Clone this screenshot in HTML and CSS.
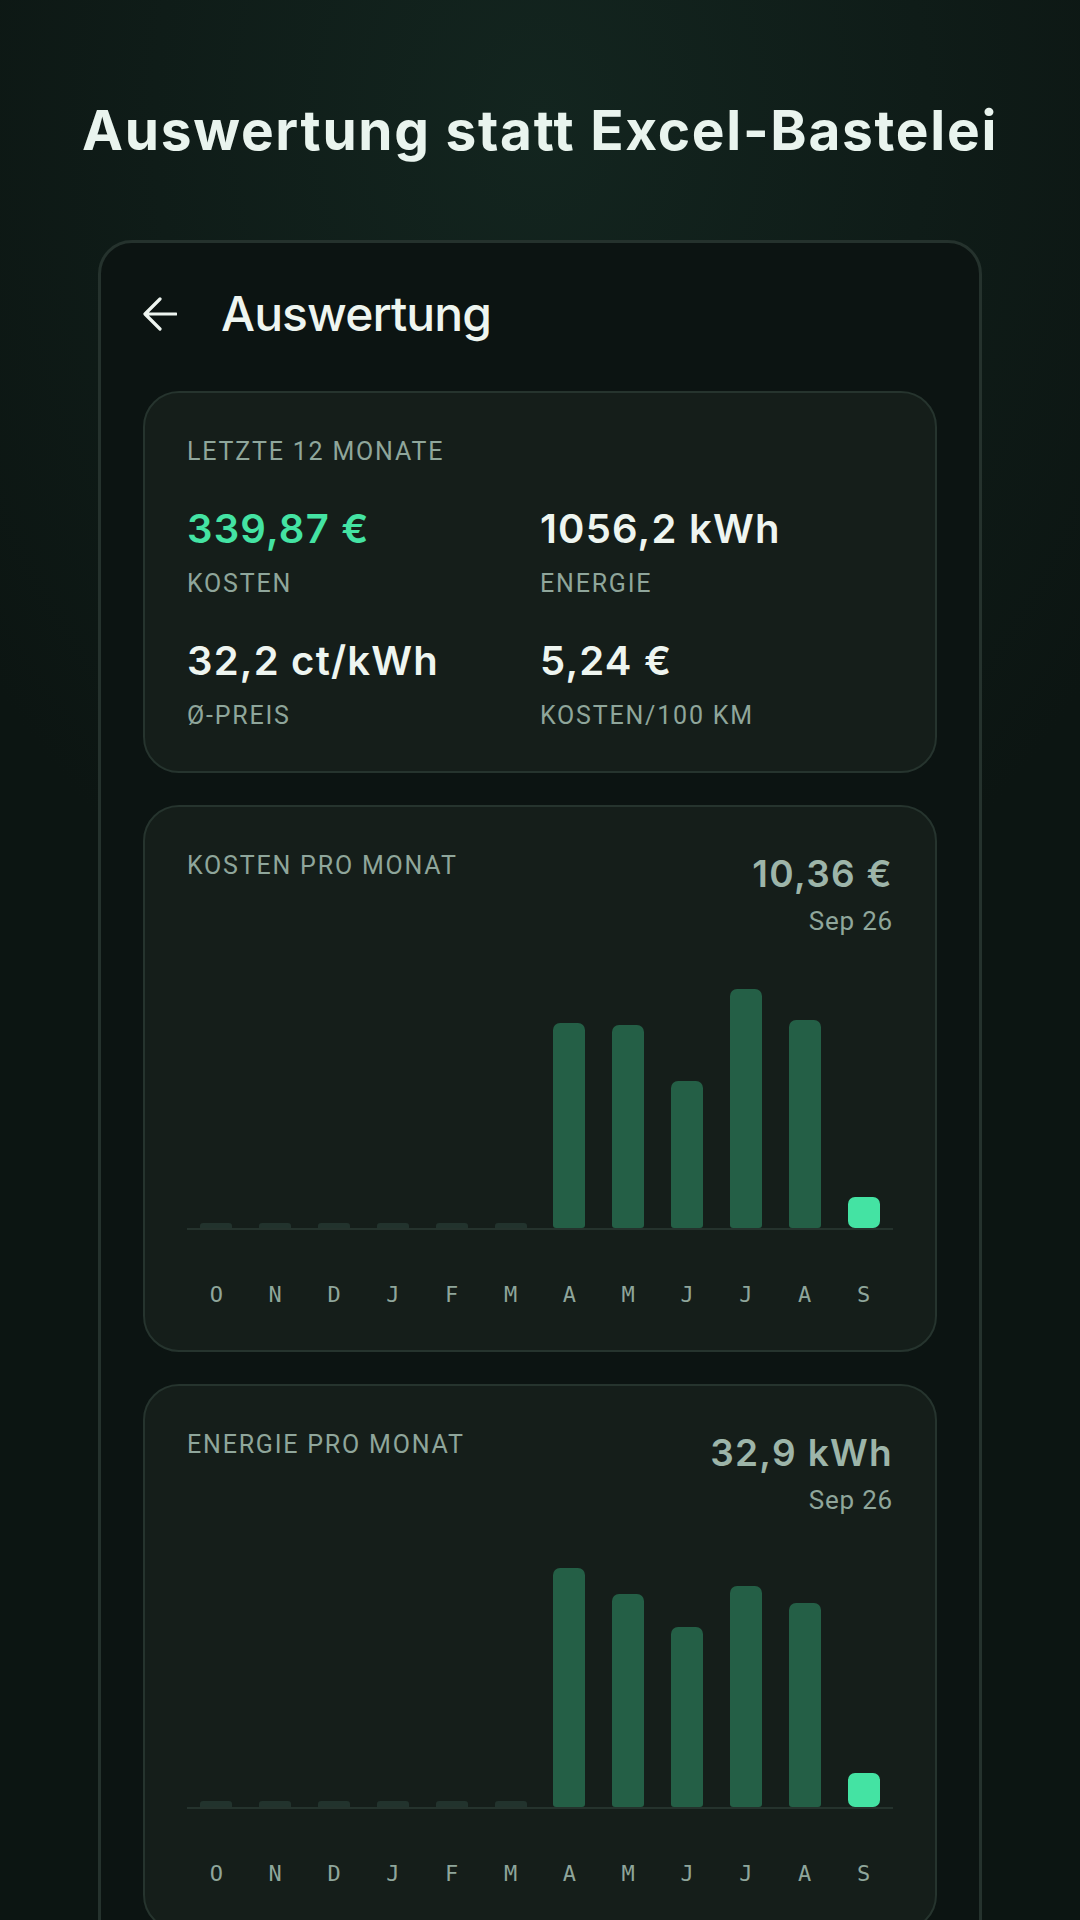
FILE: index.html
```html
<!DOCTYPE html>
<html lang="de">
<head>
<meta charset="utf-8">
<title>Auswertung</title>
<link rel="stylesheet" href="styles.css">
</head>
<body>
<h1 class="hero">Auswertung statt Excel-Bastelei</h1>
<div class="phone">
  <header class="appbar">
    <svg class="back" viewBox="0 0 34 34" width="34" height="34" aria-hidden="true">
      <path d="M33 17H3M17 2L2 17L17 32" fill="none" stroke="#eef5f0" stroke-width="3.2" stroke-linecap="round" stroke-linejoin="round"/>
    </svg>
    <span class="appbar-title">Auswertung</span>
  </header>

  <section class="card summary">
    <div class="caption">Letzte 12 Monate</div>
    <div class="stats">
      <div class="stat"><div class="val accent">339,87 €</div><div class="caption">Kosten</div></div>
      <div class="stat"><div class="val">1056,2 kWh</div><div class="caption">Energie</div></div>
      <div class="stat"><div class="val">32,2 ct/kWh</div><div class="caption">Ø-Preis</div></div>
      <div class="stat"><div class="val">5,24 €</div><div class="caption">Kosten/100 km</div></div>
    </div>
  </section>

  <section class="card chart-card">
    <div class="chart-head">
      <div class="caption">Kosten pro Monat</div>
      <div class="sel">
        <div class="sel-val">10,36 €</div>
        <div class="sel-date">Sep 26</div>
      </div>
    </div>
    <div class="bars">
      <div class="col"><div class="bar empty" style="height:5px"></div></div>
      <div class="col"><div class="bar empty" style="height:5px"></div></div>
      <div class="col"><div class="bar empty" style="height:5px"></div></div>
      <div class="col"><div class="bar empty" style="height:5px"></div></div>
      <div class="col"><div class="bar empty" style="height:5px"></div></div>
      <div class="col"><div class="bar empty" style="height:5px"></div></div>
      <div class="col"><div class="bar" style="height:205px"></div></div>
      <div class="col"><div class="bar" style="height:203px"></div></div>
      <div class="col"><div class="bar" style="height:147px"></div></div>
      <div class="col"><div class="bar" style="height:239px"></div></div>
      <div class="col"><div class="bar" style="height:208px"></div></div>
      <div class="col"><div class="bar active" style="height:31px"></div></div>
    </div>
    <div class="months">
      <span>O</span><span>N</span><span>D</span><span>J</span><span>F</span><span>M</span><span>A</span><span>M</span><span>J</span><span>J</span><span>A</span><span>S</span>
    </div>
  </section>

  <section class="card chart-card">
    <div class="chart-head">
      <div class="caption">Energie pro Monat</div>
      <div class="sel">
        <div class="sel-val">32,9 kWh</div>
        <div class="sel-date">Sep 26</div>
      </div>
    </div>
    <div class="bars">
      <div class="col"><div class="bar empty" style="height:6px"></div></div>
      <div class="col"><div class="bar empty" style="height:6px"></div></div>
      <div class="col"><div class="bar empty" style="height:6px"></div></div>
      <div class="col"><div class="bar empty" style="height:6px"></div></div>
      <div class="col"><div class="bar empty" style="height:6px"></div></div>
      <div class="col"><div class="bar empty" style="height:6px"></div></div>
      <div class="col"><div class="bar" style="height:239px"></div></div>
      <div class="col"><div class="bar" style="height:213px"></div></div>
      <div class="col"><div class="bar" style="height:180px"></div></div>
      <div class="col"><div class="bar" style="height:221px"></div></div>
      <div class="col"><div class="bar" style="height:204px"></div></div>
      <div class="col"><div class="bar active" style="height:34px"></div></div>
    </div>
    <div class="months">
      <span>O</span><span>N</span><span>D</span><span>J</span><span>F</span><span>M</span><span>A</span><span>M</span><span>J</span><span>J</span><span>A</span><span>S</span>
    </div>
  </section>
</div>
</body>
</html>
```

FILE: styles.css
```css
html, body {
  margin: 0;
  padding: 0;
}
body {
  width: 1080px;
  height: 1920px;
  overflow: hidden;
  background: radial-gradient(ellipse 700px 900px at 540px 120px, #13251f 0%, #0f1c18 55%, #0c1512 100%);
  background-color: #0c1512;
  font-family: Roboto, "Noto Sans", sans-serif;
  color: #eef5f0;
}
.hero {
  margin: 0;
  padding-top: 97px;
  text-align: center;
  white-space: nowrap;
  font-family: Inter, "Noto Sans", sans-serif;
  font-weight: 700;
  font-size: 55px;
  line-height: 66px;
  letter-spacing: 1.7px;
  color: #e9f4ee;
}
.phone {
  width: 884px;
  box-sizing: border-box;
  margin: 77px auto 0;
  border: 3px solid #25322d;
  border-radius: 34px;
  background: #0c1412;
  padding: 0 42px 60px;
  height: 1800px;
}
.appbar {
  display: flex;
  align-items: center;
  gap: 44px;
  height: 62px;
  padding: 40px 0 46px;
}
.back {
  display: block;
  flex: none;
}
.appbar-title {
  font-family: Inter, "Noto Sans", sans-serif;
  font-size: 48px;
  font-weight: 500;
  line-height: 62px;
  letter-spacing: -0.9px;
  color: #eef5f0;
}
.card {
  background: #151e1a;
  border: 2px solid #26342e;
  border-radius: 36px;
  padding: 44px 42px 42px;
}
.card.summary {
  padding-bottom: 40px;
}
.card + .card {
  margin-top: 32px;
}
.caption {
  font-family: Roboto, "Noto Sans", sans-serif;
  font-size: 25px;
  line-height: 30px;
  letter-spacing: 1.8px;
  text-transform: uppercase;
  color: #8fa69b;
}
.stats {
  margin-top: 38px;
  display: grid;
  grid-template-columns: 1fr 1fr;
  row-gap: 38px;
}
.val {
  font-family: Inter, "Noto Sans", sans-serif;
  font-weight: 600;
  font-size: 40px;
  line-height: 48px;
  letter-spacing: 1.2px;
  color: #eef5f0;
  margin-bottom: 16px;
}
.val.accent {
  color: #44e3a3;
}
.chart-head {
  display: flex;
  justify-content: space-between;
  align-items: flex-start;
}
.sel {
  text-align: right;
}
.sel-val {
  font-family: Inter, "Noto Sans", sans-serif;
  font-weight: 600;
  font-size: 37px;
  line-height: 45px;
  letter-spacing: 1.3px;
  color: #9db5a9;
}
.sel-date {
  margin-top: 10px;
  font-family: Roboto, "Noto Sans", sans-serif;
  font-size: 26px;
  line-height: 30px;
  letter-spacing: 0.8px;
  color: #8fa69b;
}
.bars {
  margin-top: 32px;
  height: 260px;
  display: grid;
  grid-template-columns: repeat(12, 1fr);
  align-items: end;
  border-bottom: 2px solid #25332d;
}
.col {
  display: flex;
  justify-content: center;
  align-items: flex-end;
}
.bar {
  width: 32px;
  background: #245f46;
  border-radius: 7px 7px 3px 3px;
}
.bar.empty {
  background: #22332d;
  border-radius: 3px 3px 0 0;
}
.bar.active {
  background: #44e3a3;
  border-radius: 7px;
}
.months {
  margin-top: 52px;
  display: grid;
  grid-template-columns: repeat(12, 1fr);
  text-align: center;
  font-family: "DejaVu Sans Mono", "Liberation Mono", monospace;
  font-size: 22px;
  line-height: 26px;
  color: #8fa69b;
}
```
